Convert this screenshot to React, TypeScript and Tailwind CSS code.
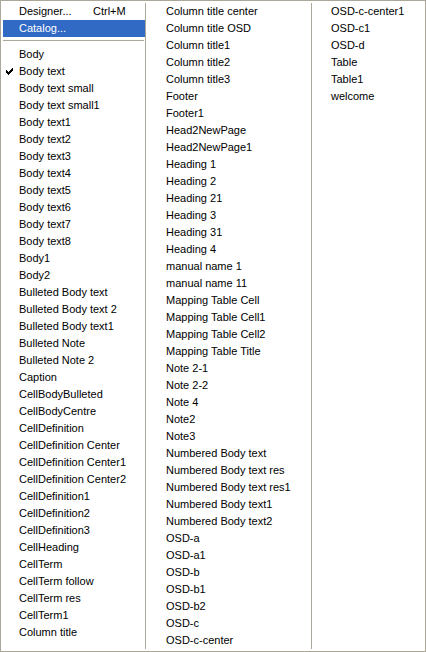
const col1 = [
  'Body', 'Body text', 'Body text small', 'Body text small1', 'Body text1', 'Body text2', 'Body text3',
  'Body text4', 'Body text5', 'Body text6', 'Body text7', 'Body text8', 'Body1', 'Body2',
  'Bulleted Body text', 'Bulleted Body text 2', 'Bulleted Body text1', 'Bulleted Note', 'Bulleted Note 2',
  'Caption', 'CellBodyBulleted', 'CellBodyCentre', 'CellDefinition', 'CellDefinition Center',
  'CellDefinition Center1', 'CellDefinition Center2', 'CellDefinition1', 'CellDefinition2',
  'CellDefinition3', 'CellHeading', 'CellTerm', 'CellTerm follow', 'CellTerm res', 'CellTerm1', 'Column title',
];

const col2 = [
  'Column title center', 'Column title OSD', 'Column title1', 'Column title2', 'Column title3', 'Footer',
  'Footer1', 'Head2NewPage', 'Head2NewPage1', 'Heading 1', 'Heading 2', 'Heading 21', 'Heading 3',
  'Heading 31', 'Heading 4', 'manual name 1', 'manual name 11', 'Mapping Table Cell', 'Mapping Table Cell1',
  'Mapping Table Cell2', 'Mapping Table Title', 'Note 2-1', 'Note 2-2', 'Note 4', 'Note2', 'Note3',
  'Numbered Body text', 'Numbered Body text res', 'Numbered Body text res1', 'Numbered Body text1',
  'Numbered Body text2', 'OSD-a', 'OSD-a1', 'OSD-b', 'OSD-b1', 'OSD-b2', 'OSD-c', 'OSD-c-center',
];

const col3 = ['OSD-c-center1', 'OSD-c1', 'OSD-d', 'Table', 'Table1', 'welcome'];

// check mark as drawn by the classic menu
function Check() {
  return (
    <svg width="7" height="7" viewBox="0 0 7 7" className="absolute left-[3px] top-[5px]" shapeRendering="crispEdges">
      <path d="M0 2h1v3h-1zM1 3h1v3h-1zM2 4h1v3h-1zM3 3h1v3h-1zM4 2h1v3h-1zM5 1h1v3h-1zM6 0h1v3h-1z" fill="#000" />
    </svg>
  );
}

function Item({ label, checked }: { label: string; checked?: boolean }) {
  return (
    <div className="relative h-[17px] leading-[17px] whitespace-nowrap pl-[16px]">
      {checked && <Check />}
      {label}
    </div>
  );
}

export default function App() {
  return (
    <div className="w-[426px] h-[652px] bg-white border border-[#aca899] p-[2px] text-[11px] text-black font-['Liberation_Sans',Arial,sans-serif]">
      <div className="flex h-[646px]">
        <div className="w-[142px] shrink-0">
          <div className="h-[17px] leading-[17px] pl-[16px] flex">
            <span className="w-[74px]">Designer...</span>
            <span>Ctrl+M</span>
          </div>
          <div className="h-[17px] leading-[17px] pl-[16px] bg-[#316ac5] text-white">Catalog...</div>
          <div className="h-[9px] pt-[3px]">
            <div className="h-px bg-[#aca899] mr-px" />
          </div>
          {col1.map((l) => (
            <Item key={l} label={l} checked={l === 'Body text'} />
          ))}
        </div>
        <div className="w-px bg-[#aca899] shrink-0" />
        <div className="w-[165px] shrink-0 pl-[4px]">
          {col2.map((l) => (
            <Item key={l} label={l} />
          ))}
        </div>
        <div className="w-px bg-[#aca899] shrink-0" />
        <div className="flex-1 pl-[3px]">
          {col3.map((l) => (
            <Item key={l} label={l} />
          ))}
        </div>
      </div>
    </div>
  );
}
